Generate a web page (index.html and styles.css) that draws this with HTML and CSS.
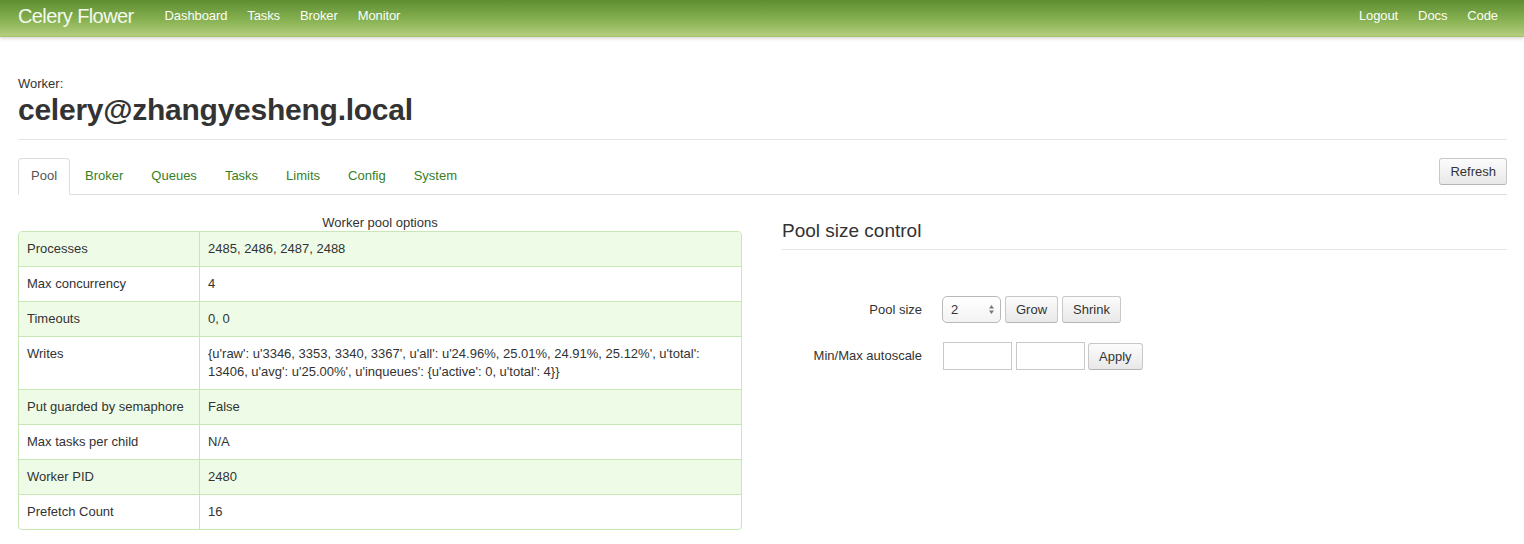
FILE: index.html
```html
<!DOCTYPE html>
<html>
<head>
<meta charset="utf-8">
<link rel="stylesheet" href="styles.css">
</head>
<body>
<header class="navbar">
  <div class="nav-left">
    <a class="brand">Celery Flower</a>
    <a class="nav-link">Dashboard</a>
    <a class="nav-link">Tasks</a>
    <a class="nav-link">Broker</a>
    <a class="nav-link">Monitor</a>
  </div>
  <div class="nav-right">
    <a class="nav-link">Logout</a>
    <a class="nav-link">Docs</a>
    <a class="nav-link">Code</a>
  </div>
</header>
<main class="container">
  <div class="page-header">
    <div class="label-small">Worker:</div>
    <h1 class="worker-name">celery@zhangyesheng.local</h1>
  </div>
  <div class="tabs-row">
    <ul class="tabs">
      <li class="tab active">Pool</li>
      <li class="tab">Broker</li>
      <li class="tab">Queues</li>
      <li class="tab">Tasks</li>
      <li class="tab">Limits</li>
      <li class="tab">Config</li>
      <li class="tab">System</li>
    </ul>
    <button class="btn refresh">Refresh</button>
  </div>
  <div class="grid">
    <section class="left">
      <div class="caption">Worker pool options</div>
      <table class="opts">
        <tr><td class="k">Processes</td><td>2485, 2486, 2487, 2488</td></tr>
        <tr><td class="k">Max concurrency</td><td>4</td></tr>
        <tr><td class="k">Timeouts</td><td>0, 0</td></tr>
        <tr><td class="k">Writes</td><td>{u'raw': u'3346, 3353, 3340, 3367', u'all': u'24.96%, 25.01%, 24.91%, 25.12%', u'total': 13406, u'avg': u'25.00%', u'inqueues': {u'active': 0, u'total': 4}}</td></tr>
        <tr><td class="k">Put guarded by semaphore</td><td>False</td></tr>
        <tr><td class="k">Max tasks per child</td><td>N/A</td></tr>
        <tr><td class="k">Worker PID</td><td>2480</td></tr>
        <tr><td class="k">Prefetch Count</td><td>16</td></tr>
      </table>
    </section>
    <section class="right">
      <h3 class="section-title">Pool size control</h3>
      <div class="form">
        <div class="form-row">
          <label class="form-label">Pool size</label>
          <div class="controls">
            <div class="select"><span>2</span><svg width="7" height="11" viewBox="0 0 7 11"><path d="M3.5 1 L6 4.5 H1 Z M3.5 10 L6 6.5 H1 Z" fill="#777"/></svg></div>
            <button class="btn">Grow</button>
            <button class="btn">Shrink</button>
          </div>
        </div>
        <div class="form-row">
          <label class="form-label">Min/Max autoscale</label>
          <div class="controls">
            <input class="input" type="text">
            <input class="input" type="text">
            <button class="btn apply">Apply</button>
          </div>
        </div>
      </div>
    </section>
  </div>
</main>
</body>
</html>
```
FILE: styles.css
```css
* { box-sizing: border-box; }
body {
  margin: 0;
  font-family: "Liberation Sans", Arial, Helvetica, sans-serif;
  font-size: 13px;
  line-height: 18px;
  color: #333;
  background: #fff;
}
.navbar {
  height: 37px;
  display: flex;
  justify-content: space-between;
  align-items: center;
  padding: 0 16px 4px 18px;
  background: linear-gradient(to bottom, #5e8d31 0%, #86b151 55%, #b4cd7e 100%);
  border-bottom: 1px solid #a3c26b;
  box-shadow: 0 1px 3px rgba(0,0,0,0.12), 0 3px 4px rgba(0,0,0,0.05);
}
.nav-left, .nav-right { display: flex; align-items: center; }
.brand {
  color: #f4f8ee;
  font-size: 20px;
  letter-spacing: -0.6px;
  margin-right: 21px;
  line-height: 30px;
}
.nav-link {
  color: #fbfdf8;
  font-size: 13px;
  padding: 0 10px;
  line-height: 30px;
  letter-spacing: -0.1px;
}
.nav-right .nav-link { padding: 0 10px 0 10px; }
.container { padding: 0 17px 0 18px; }
.page-header {
  padding-top: 40px;
  padding-bottom: 12px;
  border-bottom: 1px solid #e5e5e5;
  margin-bottom: 18px;
}
.label-small { font-size: 13px; line-height: 14px; }
.worker-name {
  margin: 2px 0 0;
  font-size: 30px;
  line-height: 34px;
  font-weight: bold;
  letter-spacing: -0.25px;
}
.tabs-row {
  display: flex;
  justify-content: space-between;
  align-items: flex-start;
  border-bottom: 1px solid #ddd;
}
.tabs { list-style: none; margin: 0; padding: 0; display: flex; }
.tab {
  color: #35801f;
  padding: 8px 12px 9px;
  margin-right: 2px;
  line-height: 18px;
  margin-bottom: -1px;
  border: 1px solid transparent;
  border-radius: 4px 4px 0 0;
}
.tab.active {
  color: #555;
  border-color: #ddd;
  border-bottom-color: #fff;
  background: #fff;
}
.btn {
  font-family: inherit;
  font-size: 13px;
  color: #333;
  height: 27px;
  padding: 0 10px;
  border: 1px solid #c8c8c8;
  border-bottom-color: #b5b5b5;
  border-radius: 3px;
  background: linear-gradient(to bottom, #fcfcfc, #e8e8e8);
}
.refresh { margin-bottom: 8px; }
.grid {
  display: grid;
  grid-template-columns: 724px 1fr;
  column-gap: 40px;
  padding-top: 19px;
}
.caption { text-align: center; line-height: 18px; margin-bottom: 0; }
.opts {
  width: 100%;
  border-collapse: separate;
  border-spacing: 0;
  border: 1px solid #c7e7b4;
  border-radius: 4px;
  overflow: hidden;
  margin-top: -1px;
}
.opts td {
  padding: 8px 8px 8px 8px;
  vertical-align: top;
  border-top: 1px solid #c7e7b4;
  line-height: 18px;
}
.opts tr:first-child td { border-top: none; }
.opts td.k { width: 181px; border-right: 1px solid #c7e7b4; }
.opts tr:nth-child(odd) td { background: #eefce7; }
.section-title {
  margin: 0;
  font-size: 19px;
  font-weight: normal;
  line-height: 22px;
  padding: 6px 0 7px;
  border-bottom: 1px solid #e5e5e5;
}
.form { padding-top: 46px; }
.form-row { display: flex; align-items: center; margin-bottom: 19px; }
.form-label { width: 140px; text-align: right; }
.controls { display: flex; align-items: center; gap: 4px; margin-left: 20px; }
.select {
  width: 59px;
  height: 27px;
  border: 1px solid #b9b9b9;
  border-radius: 5px;
  background: linear-gradient(to bottom, #fff, #f3f3f3);
  display: flex;
  align-items: center;
  justify-content: space-between;
  padding: 0 5px 0 8px;
}
.input {
  width: 69px;
  height: 28px;
  border: 1px solid #c8c8c8;
  border-radius: 0;
  margin: 0;
  padding: 0;
  background: #fff;
}
.input:first-child { margin-left: 1px; }
.apply { margin-left: -1px; }
```
